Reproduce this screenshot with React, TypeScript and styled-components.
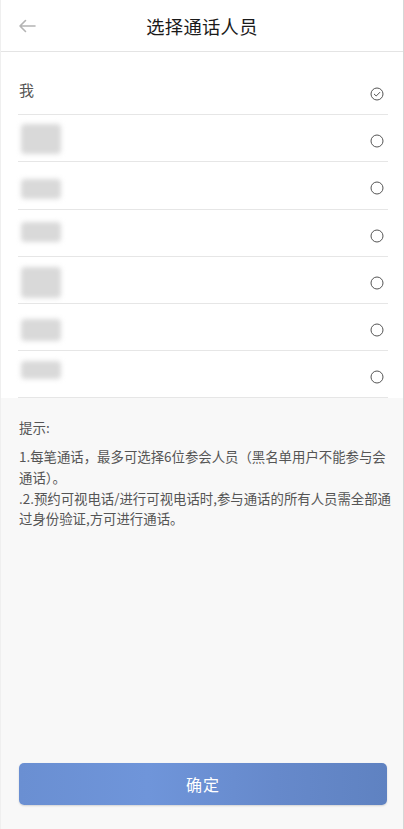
import styled, { createGlobalStyle } from "styled-components"

const GlobalStyle = createGlobalStyle`
    html, body {
        margin: 0;
        padding: 0;
        background: #f8f8f8;
    }
    body {
        font-family: "Noto Sans CJK SC", "Noto Sans", sans-serif;
    }
`

type Member = {
    id: number,
    name?: string,
    selected: boolean,
    blur?: { top: number, height: number }
}

const members: Member[] = [
    { id: 0, name: "我", selected: true },
    { id: 1, selected: false, blur: { top: 9, height: 30 } },
    { id: 2, selected: false, blur: { top: 17, height: 20 } },
    { id: 3, selected: false, blur: { top: 12, height: 20 } },
    { id: 4, selected: false, blur: { top: 10, height: 31 } },
    { id: 5, selected: false, blur: { top: 15, height: 22 } },
    { id: 6, selected: false, blur: { top: 10, height: 18 } },
]

function BackIcon() {
    return (
        <svg width="18" height="14" viewBox="0 0 18 14" fill="none">
            <path d="M17 7H2M7.5 1.5L2 7l5.5 5.5" stroke="#b4b4b4" strokeWidth="1.6" strokeLinecap="round" strokeLinejoin="round"/>
        </svg>
    )
}

function RadioIcon({ checked }: { checked: boolean }) {
    return (
        <svg width="14" height="14" viewBox="0 0 14 14" fill="none">
            <circle cx="7" cy="7" r="6" stroke="#555" strokeWidth="1"/>
            {checked && <path d="M4.3 7.2l1.9 1.8 3.6-3.6" stroke="#555" strokeWidth="1" strokeLinecap="round" strokeLinejoin="round"/>}
        </svg>
    )
}

function App() {
    return (
        <Page>
            <GlobalStyle/>
            <Header>
                <BackButton aria-label="返回"><BackIcon/></BackButton>
                <Title>选择通话人员</Title>
            </Header>
            <List>
                {members.map(m => (
                    <Row key={m.id}>
                        {m.name
                            ? <Name>{m.name}</Name>
                            : <BlurName style={{ marginTop: m.blur!.top, height: m.blur!.height }}/>}
                        <Radio><RadioIcon checked={m.selected}/></Radio>
                    </Row>
                ))}
            </List>
            <Tips>
                <TipTitle>提示:</TipTitle>
                <TipText>
                    <Line>1.每笔通话，最多可选择6位参会人员（黑名单用户不能参与会</Line>
                    <Line>通话）。</Line>
                    <Line>.2.预约可视电话/进行可视电话时,参与通话的所有人员需全部通</Line>
                    <Line>过身份验证,方可进行通话。</Line>
                </TipText>
            </Tips>
            <Spacer/>
            <Footer>
                <ConfirmButton>确定</ConfirmButton>
            </Footer>
        </Page>
    )
}

const Page = styled.div`
    width: 404px;
    height: 829px;
    display: flex;
    flex-direction: column;
    background: #f8f8f8;
    box-sizing: border-box;
    border-right: 1px solid #d6d6d6;
    border-left: 1px solid #efefef;
    overflow: hidden;
`

const Header = styled.div`
    height: 51px;
    flex: none;
    display: flex;
    align-items: center;
    justify-content: center;
    position: relative;
    background: #fff;
    border-bottom: 1px solid #e4e4e4;
`

const BackButton = styled.button`
    position: absolute;
    left: 17px;
    top: 19px;
    padding: 0;
    border: 0;
    background: none;
    display: flex;
`

const Title = styled.h1`
    margin: 0;
    font-size: 18.3px;
    font-weight: 400;
    color: #1a1a1a;
    letter-spacing: 0.3px;
`

const List = styled.div`
    background: #fff;
    padding: 16px 15px 0 17px;
    flex: none;
`

const Row = styled.div`
    height: 47.2px;
    display: flex;
    align-items: flex-start;
    justify-content: space-between;
    border-bottom: 1px solid #e6e6e6;
    box-sizing: border-box;
`

const Name = styled.span`
    font-size: 15px;
    color: #555;
    line-height: 20px;
    margin-top: 12px;
    margin-left: 1px;
`

const BlurName = styled.div`
    width: 40px;
    margin-left: 3px;
    background: #d9d9d9;
    border-radius: 4px;
    filter: blur(2.5px);
`

const Radio = styled.span`
    display: flex;
    margin-top: 19px;
    margin-right: 4px;
`

const Tips = styled.div`
    padding: 20px 18px 0 18px;
    color: #555;
    flex: none;
`

const TipTitle = styled.div`
    font-size: 13.5px;
    line-height: 18px;
    margin-bottom: 10px;
`

const TipText = styled.div`
    font-size: 13.4px;
    line-height: 20.7px;
`

const Line = styled.div`
    white-space: nowrap;
`

const Spacer = styled.div`
    flex: 1;
`

const Footer = styled.div`
    padding: 0 16px 24px 18px;
    flex: none;
`

const ConfirmButton = styled.button`
    width: 100%;
    height: 42px;
    border: 0;
    border-radius: 5px;
    background: linear-gradient(90deg, #6a8fd2 0%, #6f95da 35%, #6689cb 70%, #5f82c1 100%);
    color: #fff;
    font-family: "Noto Sans CJK SC", sans-serif;
    font-size: 16px;
    letter-spacing: 1px;
    box-shadow: 0 1px 2px rgba(0, 0, 0, 0.15);
`

export default App
